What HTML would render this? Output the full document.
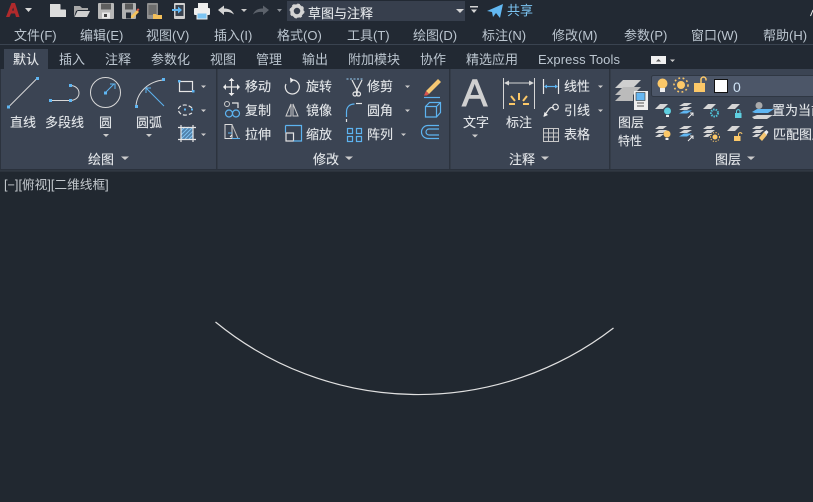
<!DOCTYPE html>
<html><head><meta charset="utf-8"><style>
html,body{margin:0;padding:0;background:#212830;overflow:hidden}
svg{display:block}
text{font-family:"Liberation Sans","Noto Sans CJK SC",sans-serif;font-size:13px;fill:#e4e7ea;stroke:#e4e7ea;stroke-width:.12}
.m text{fill:#bcc6d0;stroke:none}
.t text{fill:#bcc6d0;stroke:none}
.w{stroke:#e6e6e6;fill:none;stroke-width:1.2}
.b{stroke:#5db3f0;fill:none;stroke-width:1.2}
.f{fill:#5fb6f2}
.g{fill:#d6d6d6}
.y{fill:#fcc868}
</style></head><body>
<svg width="813" height="502" viewBox="0 0 813 502" xmlns="http://www.w3.org/2000/svg">
<rect width="813" height="502" fill="#212830"/>
<!-- title -->
<rect width="813" height="44" fill="#222933"/>
<rect y="44" width="813" height="1" fill="#3a4350"/>
<rect y="45" width="813" height="24" fill="#222933"/>
<!-- logo -->
<path d="M6 17 L11.500 3 H15 L19.500 17 H16 L15 13.500 H11 L9.500 17 Z M12 10.500 H14 L13.200 7.500Z" fill="#b02a2c"/>
<path d="M25 8h7l-3.500 4z" fill="#d8d8d8"/>
<!-- new -->
<path d="M50 4h10l6 6v7H50z" fill="#dcdcdc"/><path d="M60.500 4l5.500 5.500h-5.500z" fill="#222933"/>
<!-- open -->
<path d="M74 17V6h6l2 2h6v2H78l-2 1z" fill="#a8a8a8"/><path d="M74.500 17l3-6h12.500l-3 6z" fill="#cfcfcf"/>
<!-- save -->
<rect x="98" y="3" width="16" height="16" rx="1" fill="#b8b8b8"/><rect x="101" y="3.500" width="10" height="6" fill="#5e5e5e"/><rect x="102" y="12.500" width="8" height="6" fill="#e8e8e8"/><rect x="104" y="14" width="3" height="3" fill="#444"/>
<rect x="122" y="3" width="14" height="16" rx="1" fill="#b0b0b0"/><rect x="125" y="3.500" width="8" height="6" fill="#5a5a5a"/><rect x="126" y="12.500" width="5" height="6" fill="#222933"/>
<path d="M131 16l6-6 2 2-6 6h-2z" fill="#f4c25c"/><rect x="136.500" y="9.500" width="2.500" height="2" fill="#e05a4a" transform="rotate(-45 137 10)"/>
<!-- sheet open -->
<rect x="147" y="3" width="11" height="16" rx="1" fill="#8f8f8f"/><rect x="148.500" y="5" width="8" height="10" fill="#6d6d6d"/><path d="M153 14h3l1 1h5v4h-9z" fill="#f3bf5a"/>
<!-- sheet save -->
<rect x="174" y="3" width="11" height="16" rx="1" fill="#cfcfcf"/><rect x="175.500" y="5" width="8" height="11" fill="#3a424e"/><path d="M172 9h6V6.500l4 3.500-4 3.500V11h-6z" fill="#5fb6f2"/>
<!-- print -->
<rect x="198" y="3" width="10" height="5" fill="#eee"/><rect x="194" y="8" width="16" height="7" rx="1" fill="#eee"/><rect x="197" y="13" width="10" height="6" fill="#7cc4f2" stroke="#eee"/>
<!-- undo -->
<path d="M218 10l6-4.500v3c4 0 8 1 10 6-3-2.500-6-3-10-2.500v3z" fill="#d4d4d4"/><path d="M241 9h6l-3 3z" fill="#c8c8c8"/>
<path d="M269 10l-6-4.500v3c-4 0-8 1-10 6 3-2.500 6-3 10-2.500v3z" fill="#5c626b"/><path d="M277 9h5l-2.500 3z" fill="#8a8f96"/>
<!-- workspace -->
<rect x="287" y="1" width="178" height="20" fill="#373f4d"/>
<circle cx="297" cy="11" r="5" fill="none" stroke="#d4d4d4" stroke-width="3.500"/><circle cx="297" cy="11" r="6.600" fill="none" stroke="#d4d4d4" stroke-width="1.800" stroke-dasharray="2.500 2.700"/>
<text x="308" y="18" style="font-size:13px" textLength="65">草图与注释</text>
<path d="M456 9h8l-4 4z" fill="#d4d4d4"/>
<path d="M470 6h8v1.500h-8zM471 9.500h6l-3 3.500z" fill="#d4d4d4"/>
<path d="M487 11l16-7-3 14-4-5-3 4-1-5z" fill="#62b8f2"/>
<text x="507" y="15" style="font-size:13px;fill:#7cc4f2;stroke:none">共享</text>
<path d="M810.500 16l2.500-6" stroke="#e8e8e8" fill="none"/>
<!-- menu -->
<g class="m">
<text x="14" y="40">文件(F)</text><text x="80" y="40">编辑(E)</text><text x="146" y="40">视图(V)</text><text x="214" y="40">插入(I)</text><text x="277" y="40">格式(O)</text><text x="347" y="40">工具(T)</text><text x="413" y="40">绘图(D)</text><text x="482" y="40">标注(N)</text><text x="552" y="40">修改(M)</text><text x="624" y="40">参数(P)</text><text x="691" y="40">窗口(W)</text><text x="763" y="40">帮助(H)</text>
</g>
<!-- tabs -->
<rect x="4" y="49" width="44" height="20" fill="#3b4453"/>
<text x="13" y="64">默认</text>
<g class="t">
<text x="59" y="64">插入</text><text x="105" y="64">注释</text><text x="151" y="64">参数化</text><text x="210" y="64">视图</text><text x="256" y="64">管理</text><text x="302" y="64">输出</text><text x="348" y="64">附加模块</text><text x="420" y="64">协作</text><text x="466" y="64">精选应用</text><text x="538" y="64" textLength="82">Express Tools</text>
</g>
<rect x="651" y="56" width="15" height="8" fill="#f0f0f0"/><path d="M656 61.500h5l-2.500-2.500z" fill="#555"/><path d="M670 59.500h5l-2.500 2.500z" fill="#ccc"/>
<!-- ribbon -->
<rect y="69" width="813" height="100" fill="#3b4453"/>
<rect y="169" width="813" height="1.500" fill="#2a313c"/>
<rect y="170.500" width="813" height="1" fill="#4b5462" opacity=".5"/>
<rect x="0" y="69" width="1" height="100" fill="#2c333e"/>
<rect x="216" y="69" width="1.500" height="100" fill="#2c333e"/>
<rect x="449" y="69" width="1.500" height="100" fill="#2c333e"/>
<rect x="609" y="69" width="1.500" height="100" fill="#2c333e"/>
<!-- draw panel -->
<path d="M8.500 107L37.500 78" stroke="#d8d8d8" fill="none"/><rect class="f" x="7" y="105.500" width="3" height="3"/><rect class="f" x="36" y="77" width="3" height="3"/>
<path d="M50 100.500H70M70 85.500c12 0 12 15 0 15" stroke="#d8d8d8" fill="none"/><rect class="f" x="49" y="99" width="3" height="3"/><rect class="f" x="69" y="99" width="3" height="3"/><rect class="f" x="69" y="84" width="3" height="3"/>
<circle cx="105.500" cy="92.500" r="15" stroke="#d8d8d8" fill="none"/><rect class="f" x="104" y="91.500" width="3" height="3"/><path d="M106 92l8-8M110 84h5v5" stroke="#5db3f0" fill="none"/>
<path d="M136 106c1-14 13-25 28-26" stroke="#d8d8d8" fill="none"/><rect class="f" x="135" y="105" width="3" height="3"/><rect class="f" x="162" y="78" width="3" height="3"/><path d="M164 106L146 88M146 93v-5h5" stroke="#5db3f0" fill="none"/>
<text x="10" y="127">直线</text><text x="45" y="127">多段线</text><text x="99" y="127">圆</text><text x="136" y="127">圆弧</text>
<path d="M103 134h6l-3 3zM146 134h6l-3 3z" fill="#ccc"/>
<rect x="179.500" y="81.500" width="13" height="10" class="w"/><rect class="f" x="178" y="80" width="2.500" height="2.500"/><rect class="f" x="192" y="90" width="2.500" height="2.500"/>
<path d="M201 85.500h5l-2.500 2.500zM201 109.500h5l-2.500 2.500zM201 133.500h5l-2.500 2.500z" fill="#ccc"/>
<path d="M192 108c-3-3-8-4-11-2-4 2-3 6 0 8 3 2 8 1 11-1" class="w" stroke-dasharray="4 2"/><rect class="f" x="184" y="108.500" width="2" height="2"/><rect class="f" x="191" y="108.500" width="2" height="2"/>
<rect x="181" y="127" width="12" height="12" fill="#4f7fa8"/><path d="M181 131l4-4M181 135l8-8M181 139l12-12M185 139l8-8M189 139l4-4" stroke="#7fc2f0" fill="none"/><path d="M178 127.500h18M178 139.500h18M181 125v17M193 125v17" class="w"/>
<text x="88" y="164">绘图</text><path d="M121 156.500h8l-4 3.500z" fill="#ccc"/>
<!-- modify panel -->
<path d="M231.500 80v14M224.500 87h14" class="w" stroke-width="1.600"/><path d="M231.500 78l3 3h-6zM231.500 96l3-3h-6zM223 87l3-3v6zM240 87l-3-3v6z" fill="#eee"/>
<text x="245" y="91">移动</text>
<path d="M293 80a7 7 0 1 1-7 4" class="w"/><path d="M290 77.500l4 2.500-3.500 3z" fill="#eee"/>
<text x="306" y="91">旋转</text>
<path d="M346.500 79h17" stroke="#9ad0f5" stroke-dasharray="2 1.500"/><path d="M352 80l6 12M362 80l-6 12" class="w" stroke-width="1.800"/><circle cx="355" cy="94" r="2" class="w"/><circle cx="358.500" cy="94" r="2" class="w"/>
<text x="367" y="91">修剪</text><path d="M405 85.500h5l-2.500 2.500z" fill="#ccc"/>
<path d="M426 91l12-12 3 3-12 12z" fill="#f6c873"/><path d="M426 91l3 3-2 1.500h-3z" fill="#d9534f"/><path d="M424 97.500h16" class="b"/>
<circle cx="227" cy="104" r="2.500" stroke="#ccc" fill="none"/><path d="M232 103h6v5" class="w"/><circle cx="229" cy="113.500" r="3.500" class="b"/><circle cx="236" cy="113.500" r="3.500" class="b"/>
<text x="245" y="115">复制</text>
<path d="M286 116l5-12v12zM293 104l5 12h-5z" stroke="#ccc" fill="none"/>
<text x="306" y="115">镜像</text>
<path d="M346.500 117v-5c0-5 3-8 8-8" class="b"/><path d="M356 103.500h6" class="w"/><path d="M346.500 119v3" class="w"/>
<text x="367" y="115">圆角</text><path d="M405 109.500h5l-2.500 2.500z" fill="#ccc"/>
<path d="M425.500 106.500h11v10.500h-11zM425.500 106.500l4-4h11v10l-4 4.500M436.500 106.500l4-4" class="b"/>
<path d="M225 124.500h7v14h-7z" stroke="#ddd" fill="none"/><path d="M232 124.500l6 14" stroke="#bbb" fill="none"/><path d="M228 133h4M232 138.500h8" stroke="#5db3f0"/><path d="M230 137l2-2" stroke="#eee"/>
<text x="245" y="139">拉伸</text>
<rect x="286" y="133" width="7.500" height="8" class="w"/><path d="M285.500 125.500h16v15.500h-8" class="b"/><path d="M285.500 125.500v7" class="b"/>
<text x="306" y="139">缩放</text>
<g class="b"><rect x="347.500" y="128.500" width="5" height="5"/><rect x="356.500" y="128.500" width="5" height="5"/><rect x="347.500" y="136.500" width="5" height="5"/><rect x="356.500" y="136.500" width="5" height="5"/></g>
<text x="367" y="139">阵列</text><path d="M401 133.500h5l-2.500 2.500z" fill="#ccc"/>
<path d="M439 125.500h-11a6.500 6.500 0 0 0 0 13h11M439 129h-10a3 3 0 0 0 0 6h10" class="b"/>
<text x="313" y="164">修改</text><path d="M345 156.500h8l-4 3.500z" fill="#ccc"/>
<!-- annotation panel -->
<text x="462" y="106" style="font-size:38px;fill:#d0d0d0;stroke:#d0d0d0;stroke-width:.9">A</text>
<text x="463" y="127">文字</text><path d="M472 134.500h6l-3 3z" fill="#ccc"/>
<path d="M503.500 78v31M534.500 78v31M505 83h28" stroke="#d6d6d6" fill="none"/><path d="M504 83l5-2.500v5zM534 83l-5-2.500v5z" fill="#d6d6d6"/>
<path d="M519 93v7M511 96l4 5M527 96l-4 5M509 104h6M523 104h6" stroke="#fcc868" stroke-width="2" fill="none"/>
<text x="506" y="127">标注</text>
<path d="M543.500 79v15M558.500 79v15" class="w"/><path d="M545 86.500h12" class="b"/><path d="M544 86.500l3-2v4zM558 86.500l-3-2v4z" class="f"/>
<text x="564" y="91">线性</text><path d="M598 85.500h5l-2.500 2.500z" fill="#ccc"/>
<path d="M544 116l5-7q2-2.500 5-1" class="w"/><path d="M543.500 117l1-5 3.500 3z" fill="#eee"/><circle cx="555.500" cy="107" r="2.800" class="w"/>
<text x="564" y="115">引线</text><path d="M598 109.500h5l-2.500 2.500z" fill="#ccc"/>
<path d="M543.500 128.500h15v13h-15zM543.500 133h15M543.500 137h15M548.500 128.500v13M553.500 128.500v13" stroke="#c8c8c8" fill="none"/>
<text x="564" y="139">表格</text>
<text x="509" y="164">注释</text><path d="M541 156.500h8l-4 3.500z" fill="#ccc"/>
<!-- layers panel -->
<path d="M615 88l8-8h18l-8 8z" fill="#cfcfcf"/><path d="M615 95l8-8h18l-8 8z" fill="#bbb"/><path d="M615 101l8-8h10v8z" fill="#bbb"/>
<rect x="634" y="91" width="14" height="19" fill="#efefef"/><rect x="636" y="92.500" width="9" height="8" fill="#66b7f2" stroke="#333" stroke-width=".6"/><path d="M637 103h7M637 106h7" stroke="#555"/>
<text x="618" y="127">图层</text><text x="618" y="145" style="font-size:12px">特性</text>
<rect x="651.500" y="75.500" width="170" height="21" rx="2" fill="#4c5668" stroke="#2f3743"/>
<circle cx="662.500" cy="83.500" r="5" class="y"/><rect x="660" y="88" width="5" height="4" fill="#eee"/>
<circle cx="681" cy="85" r="4" class="y"/><circle cx="681" cy="85" r="7" fill="none" stroke="#fcc868" stroke-width="1.600" stroke-dasharray="1.800 2.500"/>
<rect x="694" y="83" width="11" height="9" class="y"/><path d="M701 83v-3.500a2.500 2.500 0 0 1 5 0v1" stroke="#fcc868" stroke-width="1.500" fill="none"/>
<rect x="714.500" y="79.500" width="13" height="13" fill="#fff" stroke="#111"/>
<text x="733" y="92" style="font-size:14px;fill:#cfe3f5;stroke:none">0</text>
<!-- layer icon row 1 -->
<path d="M655 109l5-5h8l-5 5z" class="g"/><circle cx="667.500" cy="111" r="3.500" fill="#5fcfe0"/><rect x="666" y="115" width="3" height="2" fill="#eee"/>
<path d="M679 106l5-3h8l-5 3zM679 110l5-3h8l-5 3z" class="g"/><path d="M679 113.500l5-3h8l-5 3z" fill="#5fb6f2"/><path d="M688 118l5-5M690 113h3v3" stroke="#eee" fill="none"/>
<path d="M703 109l5-5h8l-5 5z" class="g"/><circle cx="714.500" cy="113" r="3.500" fill="none" stroke="#4fc4d8" stroke-width="2" stroke-dasharray="1.500 1"/>
<path d="M727 109l5-5h8l-5 5z" class="g"/><rect x="735" y="113" width="6.500" height="5" fill="#5fcfe0"/><path d="M736.500 113v-2a1.800 1.800 0 0 1 3.500 0v2" stroke="#5fcfe0" fill="none"/>
<path d="M752 117l5-2h16l-6 4h-13z" class="g"/><path d="M752 112l5-3h17l-6 4h-13z" fill="#5fb6f2"/><circle cx="759" cy="105.500" r="3.500" fill="#aaa"/>
<text x="772" y="115">置为当前</text>
<!-- layer icon row 2 -->
<path d="M655 129l4-3h8l-4 3zM655 133l4-3h8l-4 3zM655 137l4-3h5l-4 3z" class="g"/><circle cx="667" cy="134" r="3.500" class="y"/><rect x="665.500" y="138" width="3" height="2" fill="#eee"/>
<path d="M679 129l5-3h8l-5 3zM679 133l5-3h8l-5 3z" class="g"/><path d="M679 136.500l5-3h8l-5 3z" fill="#5fb6f2"/><path d="M688 141l5-5M690 136h3v3" stroke="#eee" fill="none"/>
<path d="M703 129l4-3h8l-4 3zM703 133l4-3h8l-4 3zM703 137l4-3h5l-4 3z" class="g"/><circle cx="715" cy="137" r="2.500" class="y"/><circle cx="715" cy="137" r="4.500" fill="none" stroke="#fcc868" stroke-dasharray="1.200 1.500"/>
<path d="M727 131l5-5h8l-5 5z" class="g"/><rect x="734" y="136" width="6.500" height="5" class="y"/><path d="M738.500 136v-2a1.800 1.800 0 0 1 3.500 0" stroke="#fcc868" fill="none"/>
<path d="M752 129l4-3h8l-4 3zM752 133l4-3h8l-4 3zM752 137l4-3h5l-4 3z" class="g"/><path d="M759 138l5-6 3 3-5 6z" fill="#f6c873"/><path d="M764 132l2.500-2 2 2-2 3z" fill="#eee"/>
<text x="773" y="139">匹配图层</text>
<text x="715" y="164">图层</text><path d="M747 156.500h8l-4 3.500z" fill="#ccc"/>
<!-- canvas -->
<text x="4" y="189" style="font-size:12.7px;fill:#c3c8cd;stroke:none">[−][俯视][二维线框]</text>
<path d="M215.500 322 A319.600 319.600 0 0 0 613.500 328" fill="none" stroke="#e0e0e0" stroke-width="1.200"/>
</svg>
</body></html>
